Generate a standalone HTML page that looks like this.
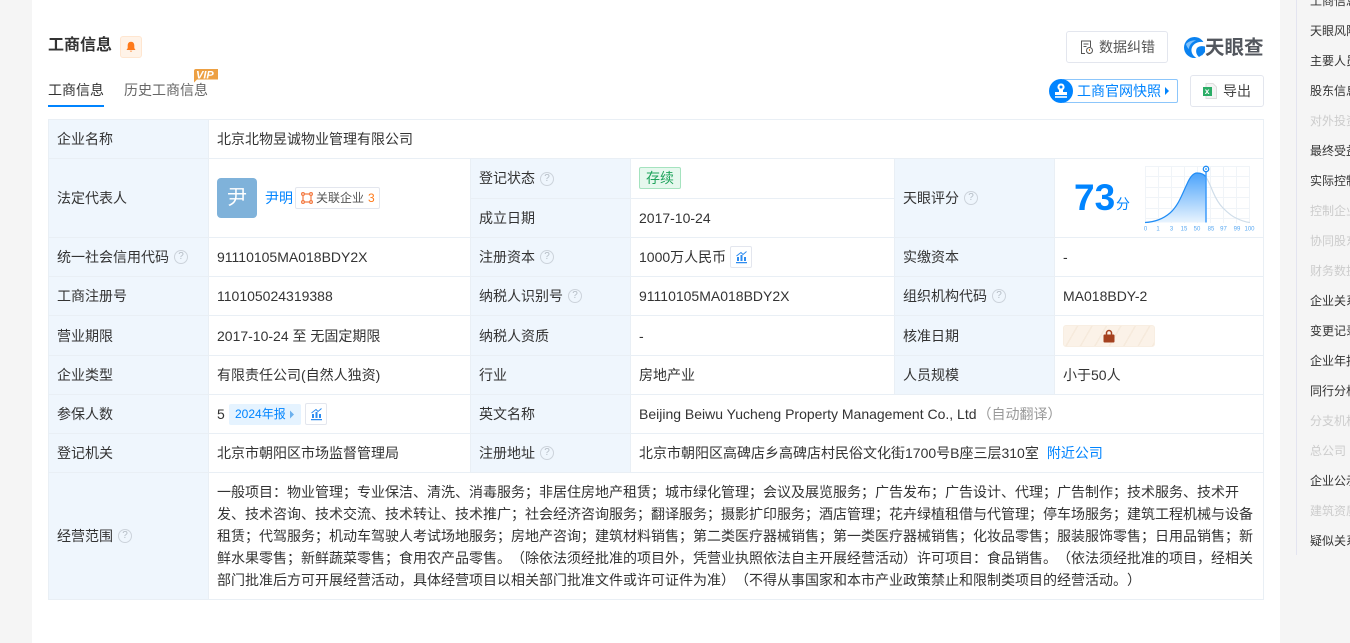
<!DOCTYPE html>
<html lang="zh"><head><meta charset="utf-8"><title>工商信息</title>
<style>
html,body{margin:0;padding:0;width:1350px;height:643px;overflow:hidden;background:#f5f5f5}
body{position:relative;font:14px/20px "Liberation Sans","Noto Sans CJK SC",sans-serif;color:#333;text-spacing-trim:space-all}
div,span,a,svg{position:absolute;white-space:nowrap}
span.i{position:static}
#m{left:32px;top:0;width:1248px;height:643px;background:#fff}
#r{left:1296px;top:0;width:1px;height:555px;background:#e3e4f0}
.s{left:1310px;height:20px;color:#333;font-size:12px;line-height:20px;width:60px;overflow:hidden}
.d{color:#ccc}
.l{background:#eff6fd}
.h{background:#e9eff5;height:1px}
.v{background:#e9eff5;width:1px}
.t{height:20px;line-height:20px}
.q{width:12px;height:12px;border:1px solid #ccd3db;border-radius:50%;color:#b4bcc5;font-size:10px;line-height:12px;text-align:center}
.b{color:#0084ff}
.sc{left:217px;height:22px;line-height:22px;font-size:14px;color:#333}
.btn{border:1px solid #e3e6ee;border-radius:3px;background:#fff;box-sizing:border-box}
.mini{width:22px;height:22px;border:1px solid #e3e6ee;border-radius:2px;box-sizing:border-box;background:#fff}
</style></head><body>
<div id="m"></div>
<div id="r"></div>
<div class="s" style="top:-9px">工商信息</div>
<div class="s" style="top:21px">天眼风险</div>
<div class="s" style="top:51px">主要人员</div>
<div class="s" style="top:81px">股东信息</div>
<div class="s d" style="top:111px">对外投资</div>
<div class="s" style="top:141px">最终受益</div>
<div class="s" style="top:171px">实际控制</div>
<div class="s d" style="top:201px">控制企业</div>
<div class="s d" style="top:231px">协同股东</div>
<div class="s d" style="top:261px">财务数据</div>
<div class="s" style="top:291px">企业关系</div>
<div class="s" style="top:321px">变更记录</div>
<div class="s" style="top:351px">企业年报</div>
<div class="s" style="top:381px">同行分析</div>
<div class="s d" style="top:411px">分支机构</div>
<div class="s d" style="top:441px">总公司</div>
<div class="s" style="top:471px">企业公示</div>
<div class="s d" style="top:501px">建筑资质</div>
<div class="s" style="top:531px">疑似关系</div>

<div class="t" style="left:48px;top:35px;font-size:16px;font-weight:bold;line-height:22px;height:22px">工商信息</div>
<div style="left:120px;top:36px;width:22px;height:22px;background:#fff3e8;border:1px solid #ffe6d0;border-radius:3px;box-sizing:border-box">
<svg style="left:4px;top:4px" width="12" height="12" viewBox="0 0 12 12"><path d="M6 .8c-2.200 0-3.300 1.700-3.300 3.700v2.600L1.500 9h9L9.300 7.100V4.500C9.300 2.500 8.200.8 6 .8zM4.700 9.800a1.400 1.400 0 0 0 2.600 0z" fill="#ff7a1a"/></svg></div>
<div class="t" style="left:48px;top:80px;color:#333">工商信息</div>
<div style="left:48px;top:105px;width:56px;height:2px;background:#0084ff"></div>
<div class="t" style="left:124px;top:80px;color:#666">历史工商信息</div>
<svg style="left:194px;top:69px" width="24" height="14" viewBox="0 0 24 14"><path d="M2 0h22v10.500H3L0 13.500V2a2 2 0 0 1 2-2z" fill="#eda043"/><text x="2" y="9.500" font-size="11" font-weight="bold" font-style="italic" fill="#fff" font-family="Liberation Sans">VIP</text></svg>

<div class="btn" style="left:1066px;top:31px;width:102px;height:32px"></div>
<svg style="left:1080px;top:40px" width="14" height="15" viewBox="0 0 14 15" fill="none" stroke="#555" stroke-width="1"><path d="M5 13.500H1.500V1h9v6M3.500 4h5M3.500 6.500h3"/><circle cx="9.500" cy="10.500" r="3" stroke="#555"/><path d="M9.500 9v2" stroke="#e58a2e"/></svg>
<div class="t" style="left:1099px;top:37px;font-size:14px;color:#555">数据纠错</div>
<svg style="left:1184px;top:37px" width="21" height="21" viewBox="0 0 21 21"><circle cx="10.500" cy="10.500" r="10.500" fill="#0b82f0"/><path d="M21 5.500C15 3.500 8.500 6.500 7.500 12C7 15.500 9 19 12.500 21L15.500 20.500C12.500 18 11.500 15 12.500 12C13.500 9.500 17 8.500 21 9.500z" fill="#fff"/><path d="M21 11.500C18 10.500 15 11 14.500 13.500C14 16 16 18 18 18.500L21 15z" fill="#0b82f0"/><path d="M2 7C5 4 9 3 12 3.500C8 5 5 8 5 12C3.500 11 2.500 9 2 7z" fill="#7fc0fa"/></svg>
<div style="left:1205px;top:36px;height:24px;line-height:24px;font-size:19.500px;font-weight:bold;color:#53575e">天眼查</div>

<div style="left:1062px;top:79px;width:116px;height:24px;border:1px solid #8cc6fb;border-radius:2px;box-sizing:border-box"></div>
<div style="left:1049px;top:79px;width:24px;height:24px;border-radius:50%;background:#0084ff"></div>
<svg style="left:1054px;top:83px" width="14" height="16" viewBox="0 0 14 16" fill="#fff"><path d="M7 0.500a3.500 3.500 0 0 1 2 6.400V9h4v3H1V9h4V6.900A3.500 3.500 0 0 1 7 .5zM7 2.500a1.500 1.500 0 1 0 0 3 1.500 1.500 0 0 0 0-3z" fill-rule="evenodd"/><rect x="1" y="13" width="12" height="2" opacity=".8"/></svg>
<div class="t b" style="left:1077px;top:81px;font-size:14px">工商官网快照</div>
<svg style="left:1164px;top:86px" width="6" height="10"><path d="M1 1l4 4-4 4z" fill="#0084ff"/></svg>
<div class="btn" style="left:1190px;top:75px;width:74px;height:32px"></div>
<svg style="left:1203px;top:83px" width="14" height="16" viewBox="0 0 14 16"><path d="M3 .5h7l3.500 3.500v11.500H3z" fill="#f4f4f4" stroke="#ddd"/><rect x="0" y="4" width="9" height="9" fill="#2bad66"/><text x="1.800" y="11" font-size="8.500" font-weight="bold" fill="#fff" font-family="Liberation Sans">x</text></svg>
<div class="t" style="left:1223px;top:81px;color:#444">导出</div>

<!-- label backgrounds -->
<div class="l" style="left:48px;top:119px;width:160px;height:481px"></div>
<div class="l" style="left:470px;top:158px;width:160px;height:315px"></div>
<div class="l" style="left:894px;top:158px;width:160px;height:236px"></div>

<!-- grid -->
<div class="h" style="left:48px;top:119px;width:1216px"></div>
<div class="h" style="left:48px;top:158px;width:1216px"></div>
<div class="h" style="left:470px;top:198px;width:424px"></div>
<div class="h" style="left:48px;top:237px;width:1216px"></div>
<div class="h" style="left:48px;top:276px;width:1216px"></div>
<div class="h" style="left:48px;top:315px;width:1216px"></div>
<div class="h" style="left:48px;top:355px;width:1216px"></div>
<div class="h" style="left:48px;top:394px;width:1216px"></div>
<div class="h" style="left:48px;top:433px;width:1216px"></div>
<div class="h" style="left:48px;top:472px;width:1216px"></div>
<div class="h" style="left:48px;top:599px;width:1216px"></div>
<div class="v" style="left:48px;top:119px;height:481px"></div>
<div class="v" style="left:208px;top:119px;height:481px"></div>
<div class="v" style="left:470px;top:158px;height:315px"></div>
<div class="v" style="left:630px;top:158px;height:315px"></div>
<div class="v" style="left:894px;top:158px;height:236px"></div>
<div class="v" style="left:1054px;top:158px;height:236px"></div>
<div class="v" style="left:1263px;top:119px;height:481px"></div>

<!-- col 1 labels -->
<div class="t" style="left:57px;top:129px">企业名称</div>
<div class="t" style="left:57px;top:188px">法定代表人</div>
<div class="t" style="left:57px;top:247px">统一社会信用代码</div><div class="q" style="left:174px;top:250px">?</div>
<div class="t" style="left:57px;top:286px">工商注册号</div>
<div class="t" style="left:57px;top:326px">营业期限</div>
<div class="t" style="left:57px;top:365px">企业类型</div>
<div class="t" style="left:57px;top:404px">参保人数</div>
<div class="t" style="left:57px;top:443px">登记机关</div>
<div class="t" style="left:57px;top:526px">经营范围</div><div class="q" style="left:118px;top:529px">?</div>

<!-- col 1 values -->
<div class="t" style="left:217px;top:129px">北京北物昱诚物业管理有限公司</div>
<div style="left:217px;top:178px;width:40px;height:40px;border-radius:4px;background:#7fb2da;color:#fff;font-size:20px;line-height:40px;text-align:center">尹</div>
<div class="t b" style="left:265px;top:188px">尹明</div>
<div style="left:295px;top:187px;width:85px;height:22px;border:1px solid #e3e6ee;border-radius:2px;box-sizing:border-box"></div>
<svg style="left:301px;top:192px" width="12" height="12" viewBox="0 0 12 12" fill="none" stroke="#f47a42" stroke-width="1.200"><circle cx="2" cy="2" r="1.400"/><circle cx="10" cy="2" r="1.400"/><circle cx="2" cy="10" r="1.400"/><circle cx="10" cy="10" r="1.400"/><path d="M3.500 2h5M2 3.500v5M10 3.500v5M3.500 10h5"/></svg>
<div class="t" style="left:316px;top:188px;font-size:12px;color:#555">关联企业</div>
<div class="t" style="left:368px;top:188px;font-size:12px;color:#ff7a1a">3</div>
<div class="t" style="left:217px;top:247px">91110105MA018BDY2X</div>
<div class="t" style="left:217px;top:286px">110105024319388</div>
<div class="t" style="left:217px;top:326px">2017-10-24 至 无固定期限</div>
<div class="t" style="left:217px;top:365px">有限责任公司(自然人独资)</div>
<div class="t" style="left:217px;top:404px">5</div>
<div style="left:229px;top:404px;width:72px;height:21px;background:#e5f3ff;border-radius:2px"></div>
<div class="t b" style="left:235px;top:404px;font-size:12px">2024年报</div>
<svg style="left:289px;top:410px" width="6" height="9"><path d="M1 .5l4 4-4 4z" fill="#6db1ee"/></svg>
<div class="mini" style="left:305px;top:403px"></div>
<svg style="left:310px;top:407px" width="13" height="14" viewBox="0 0 13 14" fill="#2d8cf0"><path d="M1 12h11v1.200H1zM2 7h2v4H2zM5.500 5h2v6h-2zM9 7h2v4H9z"/><path d="M1.500 6L6 2.500 8 4.500 11.500 1.500" fill="none" stroke="#2d8cf0"/></svg>
<div class="t" style="left:217px;top:443px">北京市朝阳区市场监督管理局</div>

<!-- col 2 -->
<div class="t" style="left:479px;top:168px">登记状态</div><div class="q" style="left:540px;top:172px">?</div>
<div class="t" style="left:479px;top:208px">成立日期</div>
<div class="t" style="left:479px;top:247px">注册资本</div><div class="q" style="left:540px;top:250px">?</div>
<div class="t" style="left:479px;top:286px">纳税人识别号</div><div class="q" style="left:568px;top:289px">?</div>
<div class="t" style="left:479px;top:326px">纳税人资质</div>
<div class="t" style="left:479px;top:365px">行业</div>
<div class="t" style="left:479px;top:404px">英文名称</div>
<div class="t" style="left:479px;top:443px">注册地址</div><div class="q" style="left:540px;top:446px">?</div>

<div style="left:639px;top:167px;width:42px;height:22px;background:#e6f8ee;border:1px solid #a5e3bf;border-radius:2px;box-sizing:border-box;color:#1fa35c;text-align:center;line-height:20px">存续</div>
<div class="t" style="left:639px;top:208px">2017-10-24</div>
<div class="t" style="left:639px;top:247px">1000万人民币</div>
<div class="mini" style="left:730px;top:246px"></div>
<svg style="left:735px;top:250px" width="13" height="14" viewBox="0 0 13 14" fill="#2d8cf0"><path d="M1 12h11v1.200H1zM2 7h2v4H2zM5.500 5h2v6h-2zM9 7h2v4H9z"/><path d="M1.500 6L6 2.500 8 4.500 11.500 1.500" fill="none" stroke="#2d8cf0"/></svg>
<div class="t" style="left:639px;top:286px">91110105MA018BDY2X</div>
<div class="t" style="left:639px;top:326px">-</div>
<div class="t" style="left:639px;top:365px">房地产业</div>
<div class="t" style="left:639px;top:404px">Beijing Beiwu Yucheng Property Management Co., Ltd<span class="i" style="color:#999;margin-left:1px">（自动翻译）</span></div>
<div class="t" style="left:639px;top:443px">北京市朝阳区高碑店乡高碑店村民俗文化街1700号B座三层310室<span class="i b" style="margin-left:8px">附近公司</span></div>

<!-- col 3 -->
<div class="t" style="left:903px;top:188px">天眼评分</div><div class="q" style="left:964px;top:191px">?</div>
<div class="t" style="left:903px;top:247px">实缴资本</div>
<div class="t" style="left:903px;top:286px">组织机构代码</div><div class="q" style="left:992px;top:289px">?</div>
<div class="t" style="left:903px;top:326px">核准日期</div>
<div class="t" style="left:903px;top:365px">人员规模</div>

<div style="left:1074px;top:176px;height:44px;line-height:44px;font-size:37px;font-weight:bold;color:#0084ff">73</div>
<div class="t b" style="left:1116px;top:194px">分</div>
<svg style="left:1143px;top:164px" width="112" height="70" viewBox="1143 164 112 70">
<defs><linearGradient id="g" x1="0" y1="0" x2="0" y2="1"><stop offset="0" stop-color="#4ba3fb"/><stop offset="1" stop-color="#e9f4fe"/></linearGradient></defs>
<g stroke="#f0f4f8" stroke-width="1" fill="none">
<path d="M1145 166.500h105M1145 176.500h105M1145 187.500h105M1145 197.500h105M1145 208.500h105M1145 218.500h105"/>
<path d="M1145.500 166v57M1158.500 166v57M1171.500 166v57M1184.500 166v57M1197.500 166v57M1210.500 166v57M1223.500 166v57M1236.500 166v57M1249.500 166v57"/></g>
<path d="M1145 222.500C1155 222 1163 219 1170 213C1179 205 1183 192 1187 184C1190 177 1193 173 1197 173C1201 173 1204 174 1206 177V222.500z" fill="url(#g)"/>
<path d="M1145 222.500C1155 222 1163 219 1170 213C1179 205 1183 192 1187 184C1190 177 1193 173 1197 173C1201 173 1204 174 1206 177" fill="none" stroke="#1f8cf5" stroke-width="1.200"/>
<path d="M1206 177C1209 182 1211 187 1213 192C1216 199 1219 204 1223 208C1228 213 1233 217 1237 218.500C1241 220.500 1245 222 1250 222.500" fill="none" stroke="#cfdde9" stroke-width="1.200"/>
<path d="M1206 172V222.500" stroke="#3c9bfa" stroke-width="1.500"/>
<circle cx="1206" cy="169" r="2.700" fill="#fff" stroke="#1f8cf5" stroke-width="1.300"/><circle cx="1206" cy="169" r=".9" fill="#1f8cf5"/>
<g font-size="6" fill="#5aa9f2" text-anchor="middle" font-family="Liberation Sans"><text x="1145.500" y="230.500">0</text><text x="1158" y="230.500">1</text><text x="1171.500" y="230.500">3</text><text x="1184" y="230.500">15</text><text x="1197" y="230.500">50</text><text x="1211" y="230.500">85</text><text x="1223.500" y="230.500">97</text><text x="1237" y="230.500">99</text><text x="1249.500" y="230.500">100</text></g>
</svg>

<div class="t" style="left:1063px;top:247px">-</div>
<div class="t" style="left:1063px;top:286px">MA018BDY-2</div>
<div style="left:1063px;top:325px;width:92px;height:22px;border-radius:3px;box-sizing:border-box;border:1px solid #f8eee2;background:repeating-linear-gradient(120deg,#fbf2e8 0 11px,#f6eadc 11px 12.500px)"></div>
<svg style="left:1103px;top:329px" width="12" height="14" viewBox="0 0 12 14"><path d="M3.500 6V4a2.500 2.500 0 0 1 5 0v2" fill="none" stroke="#a5411f" stroke-width="1.500"/><rect x="0.500" y="5.500" width="11" height="8" rx="1" fill="#a5411f"/></svg>
<div class="t" style="left:1063px;top:365px">小于50人</div>

<!-- scope -->
<div class="sc" style="top:481px">一般项目：物业管理；专业保洁、清洗、消毒服务；非居住房地产租赁；城市绿化管理；会议及展览服务；广告发布；广告设计、代理；广告制作；技术服务、技术开</div>
<div class="sc" style="top:503px">发、技术咨询、技术交流、技术转让、技术推广；社会经济咨询服务；翻译服务；摄影扩印服务；酒店管理；花卉绿植租借与代管理；停车场服务；建筑工程机械与设备</div>
<div class="sc" style="top:525px">租赁；代驾服务；机动车驾驶人考试场地服务；房地产咨询；建筑材料销售；第二类医疗器械销售；第一类医疗器械销售；化妆品零售；服装服饰零售；日用品销售；新</div>
<div class="sc" style="top:547px">鲜水果零售；新鲜蔬菜零售；食用农产品零售。（除依法须经批准的项目外，凭营业执照依法自主开展经营活动）许可项目：食品销售。（依法须经批准的项目，经相关</div>
<div class="sc" style="top:569px">部门批准后方可开展经营活动，具体经营项目以相关部门批准文件或许可证件为准）（不得从事国家和本市产业政策禁止和限制类项目的经营活动。）</div>
</body></html>
